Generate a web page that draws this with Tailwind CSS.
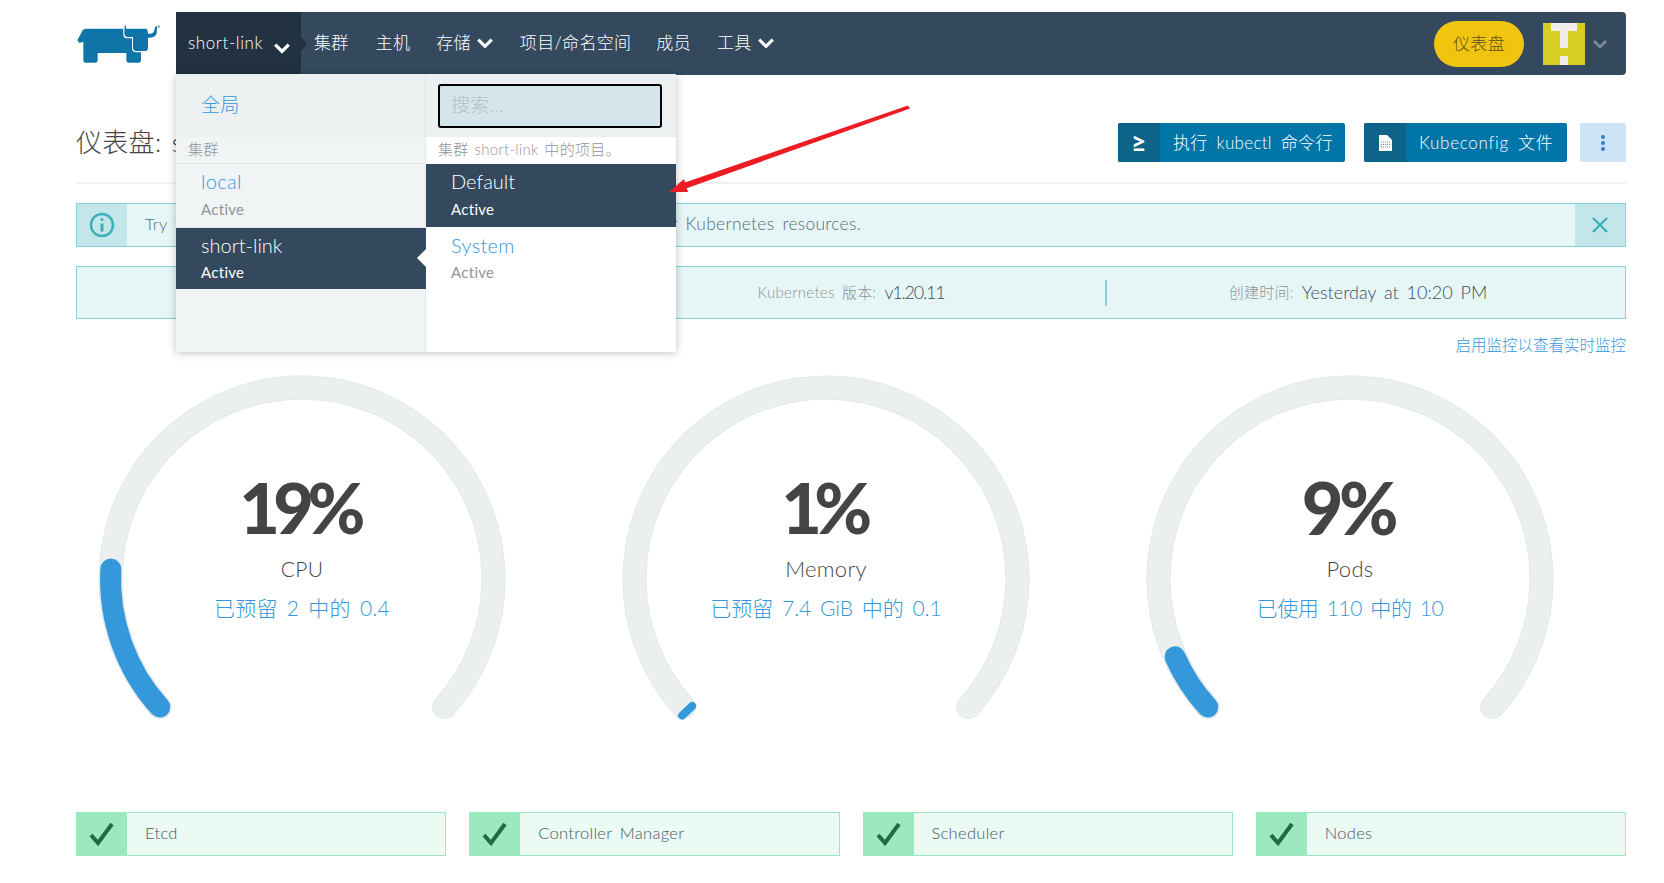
<!DOCTYPE html>
<html lang="zh">
<head>
<meta charset="UTF-8">
<title>Rancher</title>
<script src="https://cdn.jsdelivr.net/npm/@tailwindcss/browser@4"></script>
</head>
<body class="relative bg-white font-['Lato','Noto_Sans_CJK_SC',sans-serif] font-light text-[#444] tracking-[0.3px] [word-spacing:3px] overflow-hidden">
<div class="w-[1664px] h-[883px] pl-[76px] pr-[38px] pt-[12px]">

  <!-- header -->
  <header class="relative flex h-[63px] -ml-[76px] pl-[76px]">
    <div class="w-[100px] shrink-0">
      <svg class="-ml-[16px] mt-[3px]" width="110" height="55" viewBox="0 0 330 165" fill="#0f75a8">
        <path d="M52 76 L68 46 Q71 41 77 41 H190 V58 Q190 70 200 70 H216 V100 Q216 110 226 112 L243 112 V135 Q243 143 235 143 H207 Q199 143 199 135 V114 H113 V135 Q113 143 105 143 H78 Q70 143 70 135 V80 L58 84 Z"/>
        <path d="M194 30 Q198 30 198 36 V41 H256 Q262 41 263 47 L264 56 H272 Q280 56 282 49 L286 35 Q290 30 291 37 L290 55 Q286 68 270 68 H264 V98 Q264 108 254 108 H230 Q220 108 219 98 V66 H203 Q193 66 193 54 Z"/>
        <circle cx="296" cy="35" r="4" fill="#7fb8d4"/>
      </svg>
    </div>
    <nav class="flex-1 flex items-center bg-[#34495e] rounded-r-[4px] text-white text-[17px]">
      <div class="relative w-[125px] h-full bg-[#233240] flex items-center pl-[12px] gap-[10px] tracking-[0.6px]">
        <span class="pb-[2px]">short-link</span>
        <svg width="18" height="14" viewBox="0 0 16 12" class="mt-[8px]" fill="none" stroke="white" stroke-width="3"><path d="M2 3l6 6 6-6"/></svg>
        <div class="absolute -right-[6px] top-[25px] w-0 h-0 border-y-[7px] border-y-transparent border-l-[6px] border-l-[#233240]"></div>
      </div>
      <a class="pl-[13px] pr-[14px] pb-[2px]">集群</a>
      <a class="px-[13px] pb-[2px]">主机</a>
      <a class="pl-[13px] pr-[14px] pb-[2px] flex items-center gap-[5px]">存储
        <svg width="18" height="14" viewBox="0 0 16 12" fill="none" stroke="white" stroke-width="2.8"><path d="M2 3l6 6 6-6"/></svg>
      </a>
      <a class="pl-[12px] pr-[13px] pb-[2px]">项目/命名空间</a>
      <a class="px-[12px] pb-[2px]">成员</a>
      <a class="pl-[14px] pb-[2px] flex items-center gap-[5px]">工具
        <svg width="18" height="14" viewBox="0 0 16 12" fill="none" stroke="white" stroke-width="2.8"><path d="M2 3l6 6 6-6"/></svg>
      </a>
      <div class="ml-auto flex items-center pr-[18px]">
        <button class="w-[90px] h-[46px] rounded-full bg-[#f1c40f] text-[#5b5120] text-[17px]">仪表盘</button>
        <svg class="ml-[19px]" width="42" height="43" viewBox="0 0 5 5" shape-rendering="crispEdges">
          <rect width="5" height="5" fill="#d8cd24"/>
          <rect x="1" width="3" height="1" fill="#efefe8"/>
          <rect x="2" width="1" height="3" fill="#efefe8"/>
          <rect x="2" y="4" width="1" height="1" fill="#efefe8"/>
        </svg>
        <svg class="ml-[7px]" width="16" height="12" viewBox="0 0 16 12" fill="none" stroke="#7d8b99" stroke-width="2.5"><path d="M2 3l6 6 6-6"/></svg>
      </div>
    </nav>

    <!-- cluster / project menu -->
    <div class="absolute z-20 left-[176px] top-[62px] w-[500px] h-[278px] flex bg-white shadow-[0_1px_8px_rgba(0,0,0,0.25)] text-[#8f9498]">
      <div class="w-[250px] bg-[#f1f4f5] border-r border-[#e3e7e9]">
        <div class="h-[63px] bg-[#ecf0f1] flex items-center pl-[25px] text-[19px] text-[#3498db]">全局</div>
        <div class="h-[27px] pl-[12px] pb-[2px] flex items-center text-[15px] border-b border-[#dfe4e6]">集群</div>
        <div class="h-[64px] pl-[25px] pt-[3px] border-b border-[#e3e7e9]">
          <div class="text-[20px] leading-[28px] text-[#3498db]">local</div>
          <div class="text-[15px] leading-[28px] font-normal">Active</div>
        </div>
        <div class="relative h-[61px] pl-[25px] pt-[4px] -mr-px bg-[#34495e] text-white">
          <div class="text-[20px] leading-[27px] tracking-normal">short-link</div>
          <div class="text-[15px] leading-[27px] font-normal">Active</div>
          <div class="absolute right-0 top-[21px] w-0 h-0 border-y-[9px] border-y-transparent border-r-[9px] border-r-white"></div>
        </div>
      </div>
      <div class="flex-1">
        <div class="h-[63px] bg-[#ecf0f1] flex items-center pl-[12px]">
          <div class="w-[224px] h-[44px] rounded-[3px] border-2 border-black bg-[#d4e6e9] flex items-center pl-[11px] text-[19px] text-[#b4c0c2]">搜索...</div>
        </div>
        <div class="h-[27px] pl-[12px] pb-[2px] flex items-center text-[15px] [word-spacing:1.5px]">集群 short-link 中的项目。</div>
        <div class="h-[63px] pl-[25px] pt-[3px] bg-[#34495e] text-white">
          <div class="text-[20px] leading-[28px] tracking-normal">Default</div>
          <div class="text-[15px] leading-[28px] font-normal">Active</div>
        </div>
        <div class="pl-[25px] pt-[5px]">
          <div class="text-[20px] leading-[27px] text-[#3498db]">System</div>
          <div class="text-[15px] leading-[27px] font-normal">Active</div>
        </div>
      </div>
    </div>
  </header>

  <!-- page title -->
  <div class="mt-[48px] pb-[20px] border-b-2 border-[#eef1f2] flex items-center justify-between h-[61px]">
    <h1 class="text-[26px] font-light">仪表盘: short-link</h1>
    <div class="flex text-white text-[17px]">
      <button class="w-[227px] h-[39px] flex items-center rounded-[2px] bg-[#0075a8] overflow-hidden">
        <span class="w-[42px] h-full flex items-center justify-center bg-[#0e6389] text-[26px] font-bold">≥</span>
        <span class="pl-[13px] whitespace-nowrap [word-spacing:4px]">执行 kubectl 命令行</span>
      </button>
      <button class="ml-[19px] w-[203px] h-[39px] flex items-center rounded-[2px] bg-[#0075a8] overflow-hidden">
        <span class="w-[42px] h-full flex items-center justify-center bg-[#0e6389]">
          <svg width="13" height="16" viewBox="0 0 13 16"><path d="M0 0h8l5 5v11H0z" fill="white"/><path d="M2 7h9M2 9.5h9M2 12h9" stroke="#5f8fa8" stroke-width="1" stroke-dasharray="1 1"/></svg>
        </span>
        <span class="pl-[13px] whitespace-nowrap tracking-[0.7px] [word-spacing:4px]">Kubeconfig 文件</span>
      </button>
      <button class="ml-[13px] w-[46px] h-[39px] flex items-center justify-center rounded-[2px] bg-[#cce4f6]">
        <svg width="4" height="18" viewBox="0 0 4 18" fill="#2d7fc9"><circle cx="2" cy="3" r="2"/><circle cx="2" cy="9" r="2"/><circle cx="2" cy="15" r="2"/></svg>
      </button>
    </div>
  </div>

  <!-- banner -->
  <div class="mt-[19px] h-[44px] flex border border-[#86d2d9] bg-[#e6f5f6] text-[16.5px] text-[#5b6b7b]">
    <div class="w-[50px] bg-[#c2e6ea] flex items-center justify-center">
      <svg width="26" height="26" viewBox="0 0 26 26" fill="none" stroke="#3fb0b9" stroke-width="2.5"><circle cx="13" cy="13" r="11"/><path d="M13 11.5v8" stroke-width="3"/><circle cx="13" cy="7.5" r="1.6" fill="#3fb0b9" stroke="none"/></svg>
    </div>
    <p class="flex-1 pl-[18px] pb-[2px] flex items-center whitespace-pre"><span>Try the new Cluster Explorer to browse dashboards and more <span class="ml-[24px] text-[17.4px]">for Kubernetes resources.</span></span></p>
    <div class="w-[50px] bg-[#c2e6ea] flex items-center justify-center">
      <svg width="18" height="18" viewBox="0 0 18 18" stroke="#3fb0b9" stroke-width="2.4"><path d="M2 2l14 14M16 2L2 16"/></svg>
    </div>
  </div>

  <!-- cluster info -->
  <div class="mt-[19px] h-[53px] grid grid-cols-[520px_508px_1fr] items-center border border-[#86d2d9] bg-[#e6f5f6] text-[18px] text-[#3f4d5c]">
    <div></div>
    <div class="h-[26px] flex items-center justify-center">
      <span class="text-[15px] text-[#8f9498] mr-[8px]">Kubernetes 版本:</span><span class="tracking-[-1.2px]">v1.20.11</span>
    </div>
    <div class="h-[26px] pr-[16px] flex items-center justify-center border-l-2 border-[#86d2d9]">
      <span class="text-[15px] text-[#8f9498] mr-[8px]">创建时间:</span><span class="tracking-normal">Yesterday at 10:20 PM</span>
    </div>
  </div>

  <div class="mt-[15px] h-[20px] text-right text-[15.5px] text-[#3498db] [word-spacing:0] tracking-normal">启用监控以查看实时监控</div>

  <!-- gauges -->
  <div class="mt-[16px] grid grid-cols-[repeat(3,452px)] gap-x-[72px] h-[442px]">
    <div class="relative">
      <svg width="452" height="380" viewBox="0 0 452 380" fill="none" stroke-linecap="round">
        <path d="M83.7 337.1A191.5 191.5 0 1 1 368.3 337.1" stroke="#dde6e9" stroke-width="24"/>
        <path d="M83.7 337.1A191.5 191.5 0 1 1 368.3 337.1" stroke="#ebeff0" stroke-width="22.5"/>
        <path d="M83.7 337.1A191.5 191.5 0 0 1 34.8 199" stroke="#3498db" stroke-width="21"/>
      </svg>
      <div class="absolute inset-x-0 top-[92px] flex flex-col items-center">
        <div class="h-[90px] leading-[90px] text-[70px] font-black text-[#444] tracking-[-6.5px] [word-spacing:0] -ml-[6px]">19%</div>
        <div class="h-[34px] leading-[34px] text-[21px]">CPU</div>
        <div class="h-[44px] leading-[44px] text-[21px] text-[#3498db]">已预留 2 中的 0.4</div>
      </div>
    </div>
    <div class="relative">
      <svg width="452" height="380" viewBox="0 0 452 380" fill="none" stroke-linecap="round">
        <path d="M83.7 337.1A191.5 191.5 0 1 1 368.3 337.1" stroke="#dde6e9" stroke-width="24"/>
        <path d="M83.7 337.1A191.5 191.5 0 1 1 368.3 337.1" stroke="#ebeff0" stroke-width="22.5"/>
        <path d="M92.2 336L82.1 345.6" stroke="#3498db" stroke-width="8"/>
      </svg>
      <div class="absolute inset-x-0 top-[92px] flex flex-col items-center">
        <div class="h-[90px] leading-[90px] text-[70px] font-black text-[#444] tracking-[-7.5px] [word-spacing:0] -ml-[6px]">1%</div>
        <div class="h-[34px] leading-[34px] text-[22px]">Memory</div>
        <div class="h-[44px] leading-[44px] text-[21px] text-[#3498db] tracking-normal">已预留 7.4 GiB 中的 0.1</div>
      </div>
    </div>
    <div class="relative">
      <svg width="452" height="380" viewBox="0 0 452 380" fill="none" stroke-linecap="round">
        <path d="M83.7 337.1A191.5 191.5 0 1 1 368.3 337.1" stroke="#dde6e9" stroke-width="24"/>
        <path d="M83.7 337.1A191.5 191.5 0 1 1 368.3 337.1" stroke="#ebeff0" stroke-width="22.5"/>
        <path d="M83.7 337.1A191.5 191.5 0 0 1 51.1 286.9" stroke="#3498db" stroke-width="21"/>
      </svg>
      <div class="absolute inset-x-0 top-[92px] flex flex-col items-center">
        <div class="h-[90px] leading-[90px] text-[72px] font-black text-[#444] tracking-[-4.5px] [word-spacing:0] -ml-[4px]">9%</div>
        <div class="h-[34px] leading-[34px] text-[22px]">Pods</div>
        <div class="h-[44px] leading-[44px] text-[21px] text-[#3498db] tracking-[-0.4px]">已使用 110 中的 10</div>
      </div>
    </div>
  </div>

  <!-- component status -->
  <div class="grid grid-cols-4 gap-x-[23px] text-[16.5px] text-[#4a5665]">
    <div class="h-[44px] flex items-center border border-[#9ce9bf] bg-[#ebfaf3]">
      <span class="w-[50px] h-full bg-[#9ce9bf] flex items-center justify-center"><svg width="26" height="24" viewBox="0 0 26 24" fill="none" stroke="#1f6b43" stroke-width="4"><path d="M2 13l7 8L23 2"/></svg></span>
      <span class="pl-[18px] pb-[2px]">Etcd</span>
    </div>
    <div class="h-[44px] flex items-center border border-[#9ce9bf] bg-[#ebfaf3]">
      <span class="w-[50px] h-full bg-[#9ce9bf] flex items-center justify-center"><svg width="26" height="24" viewBox="0 0 26 24" fill="none" stroke="#1f6b43" stroke-width="4"><path d="M2 13l7 8L23 2"/></svg></span>
      <span class="pl-[18px] pb-[2px]">Controller Manager</span>
    </div>
    <div class="h-[44px] flex items-center border border-[#9ce9bf] bg-[#ebfaf3]">
      <span class="w-[50px] h-full bg-[#9ce9bf] flex items-center justify-center"><svg width="26" height="24" viewBox="0 0 26 24" fill="none" stroke="#1f6b43" stroke-width="4"><path d="M2 13l7 8L23 2"/></svg></span>
      <span class="pl-[18px] pb-[2px]">Scheduler</span>
    </div>
    <div class="h-[44px] flex items-center border border-[#9ce9bf] bg-[#ebfaf3]">
      <span class="w-[50px] h-full bg-[#9ce9bf] flex items-center justify-center"><svg width="26" height="24" viewBox="0 0 26 24" fill="none" stroke="#1f6b43" stroke-width="4"><path d="M2 13l7 8L23 2"/></svg></span>
      <span class="pl-[18px] pb-[2px]">Nodes</span>
    </div>
  </div>
</div>

<!-- red annotation arrow -->
<svg class="absolute z-30 left-[660px] top-[100px]" width="260" height="100" viewBox="0 0 260 100">
  <path d="M248 5.5L250 8.5L26 88.5L22 83.5Z" fill="#ed1c24"/>
  <path d="M9 92L24 79L28 92Z" fill="#ed1c24"/>
</svg>
</body>
</html>
